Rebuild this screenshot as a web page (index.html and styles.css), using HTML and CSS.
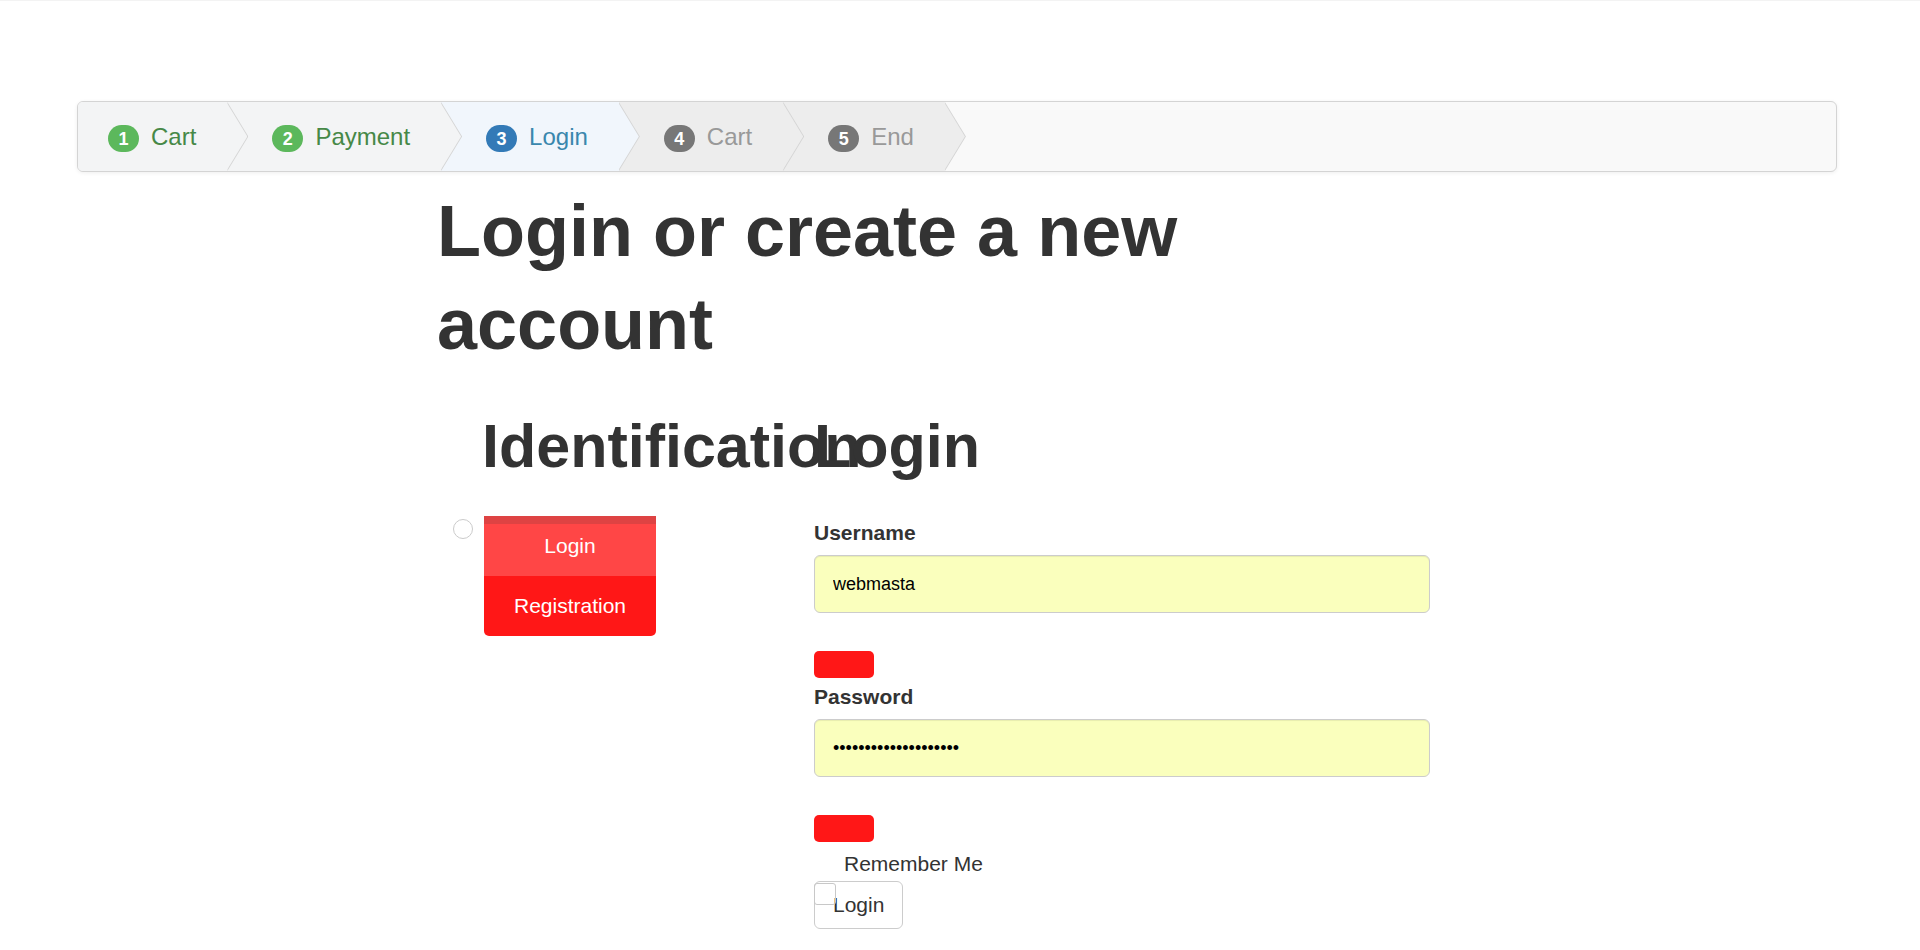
FILE: index.html
```html
<!DOCTYPE html>
<html>
<head>
  <title>Checkout - Login</title>
  <link rel="stylesheet" href="styles.css">
</head>
<body>

  <div class="wizard">
    <ul class="steps">
      <li class="complete"><span class="badge">1</span>Cart</li>
      <li class="complete"><span class="badge">2</span>Payment</li>
      <li class="active"><span class="badge">3</span>Login</li>
      <li><span class="badge">4</span>Cart</li>
      <li><span class="badge">5</span>End</li>
    </ul>
  </div>

  <div class="main">
    <h1>Login or create a new account</h1>

    <div class="row">
      <div class="col-left">
        <h2>Identification</h2>
        <div class="tabs">
          <input type="radio" name="mode">
          <ul class="tab-list">
            <li class="active"><a href="#">Login</a></li>
            <li class="last"><a href="#">Registration</a></li>
          </ul>
        </div>
      </div>

      <div class="col-right">
        <h2>Login</h2>
        <form class="login-form" onsubmit="return false">
          <label class="field-label" for="username">Username</label>
          <input class="form-control" id="username" type="text" value="webmasta">
          <div class="error"></div>

          <label class="field-label second" for="password">Password</label>
          <input class="form-control" id="password" type="password" value="12345678901234567890">
          <div class="error"></div>

          <div class="checkbox">
            <label><input type="checkbox"> Remember Me</label>
          </div>
          <button class="btn" type="submit">Login</button>
        </form>
      </div>
    </div>
  </div>

</body>
</html>
```

FILE: styles.css
```css
body {
  margin: 0;
  border-top: 1px solid #f3f3f3;
  font-family: "Liberation Sans", Arial, sans-serif;
  color: #333;
  background: #fff;
}

/* wizard */
.wizard {
  box-sizing: border-box;
  width: 1760px;
  height: 71px;
  margin: 100px 0 0 77px;
  border: 1px solid #d4d4d4;
  border-radius: 6px;
  background: #f9f9f9;
  box-shadow: 0 1px 4px rgba(0, 0, 0, .065);
}
.steps {
  display: flex;
  height: 69px;
  margin: 0;
  padding: 0;
  list-style: none;
}
.steps li {
  position: relative;
  height: 69px;
  padding: 0 31px 0 45px;
  font-size: 24px;
  line-height: 69px;
  color: #999;
  background: #ededed;
  white-space: nowrap;
}
.steps li:first-child {
  padding-left: 30px;
  border-radius: 5px 0 0 5px;
}
.steps li::before,
.steps li::after {
  content: "";
  position: absolute;
  top: 0;
  width: 21px;
  height: 69px;
  clip-path: polygon(0 0, 100% 50%, 0 100%);
}
.steps li::after {
  right: -21px;
  background: #d4d4d4;
  z-index: 1;
}
.steps li::before {
  right: -20px;
  background: #ededed;
  z-index: 2;
}
.steps li.complete {
  color: #468847;
  background: #f3f4f5;
}
.steps li.complete::before {
  background: #f3f4f5;
}
.steps li.active {
  color: #3a87ad;
  background: #f1f6fc;
}
.steps li.active::before {
  background: #f1f6fc;
}
.badge {
  display: inline-block;
  min-width: 10px;
  margin-right: 12px;
  padding: 4.5px 10.5px;
  font-size: 18px;
  font-weight: bold;
  line-height: 1;
  color: #fff;
  text-align: center;
  vertical-align: middle;
  background: #777;
  border-radius: 15px;
}
.complete .badge {
  background: #5cb85c;
}
.active .badge {
  background: #337ab7;
}

/* content */
.main {
  width: 993px;
  margin: 12.5px 0 0 437px;
}
h1 {
  margin: 0;
  font-size: 72px;
  line-height: 93px;
  font-weight: bold;
}
h2 {
  margin: 0;
  font-size: 61px;
  line-height: 70px;
  font-weight: bold;
  white-space: nowrap;
}
.row {
  display: flex;
  margin-top: 40px;
}
.col-left {
  flex: none;
  width: 377px;
}
.col-left h2 {
  margin-left: 45px;
}
.col-right {
  flex: none;
  width: 616px;
}

/* identification tabs */
.tabs {
  display: flex;
  align-items: flex-start;
  margin: 35px 0 0 16px;
}
.tabs input[type="radio"] {
  appearance: none;
  box-sizing: border-box;
  width: 20px;
  height: 20px;
  margin: 3px 11px 0 0;
  border: 1.5px solid #cbcbcb;
  border-radius: 50%;
  background: #fff;
}
.tab-list {
  width: 172px;
  margin: 0;
  padding: 0;
  list-style: none;
}
.tab-list a {
  display: block;
  padding: 15px;
  font-size: 21px;
  line-height: 30px;
  color: #fff;
  text-align: center;
  text-decoration: none;
  background: #ff1717;
}
.tab-list .active a {
  background: #ff4646;
  box-shadow: inset 0 8px 0 #de4343;
}
.tab-list .last a {
  border-radius: 0 0 5px 5px;
}

/* login form */
.login-form {
  margin-top: 37.5px;
}
.field-label {
  display: block;
  margin-bottom: 7px;
  font-size: 21px;
  line-height: 30px;
  font-weight: bold;
}
.field-label.second {
  margin-top: 4px;
}
.form-control {
  display: block;
  box-sizing: border-box;
  width: 616px;
  height: 58px;
  margin: 0;
  padding: 0 18px;
  border: 1px solid #ccc;
  border-radius: 6px;
  font-family: "Liberation Sans", Arial, sans-serif;
  font-size: 18px;
  color: #000;
  background: #faffbd;
  box-shadow: inset 0 1px 1px rgba(0, 0, 0, .075);
  outline: none;
}
.error {
  width: 60px;
  height: 27px;
  margin-top: 38px;
  background: #ff1717;
  border-radius: 5px;
}
.checkbox {
  position: relative;
  margin-top: 7px;
  padding-left: 30px;
  font-size: 21px;
  line-height: 30px;
}
.checkbox input {
  appearance: none;
  position: absolute;
  top: 34px;
  left: 0;
  box-sizing: border-box;
  width: 22px;
  height: 22px;
  margin: 0;
  border: 1px solid #c8c8c8;
  border-radius: 3px;
  background: transparent;
}
.btn {
  display: block;
  height: 48px;
  margin-top: 2px;
  padding: 0 18px;
  border: 1px solid #ccc;
  border-radius: 6px;
  font-family: "Liberation Sans", Arial, sans-serif;
  font-size: 21px;
  color: #333;
  background: #fff;
}
```
